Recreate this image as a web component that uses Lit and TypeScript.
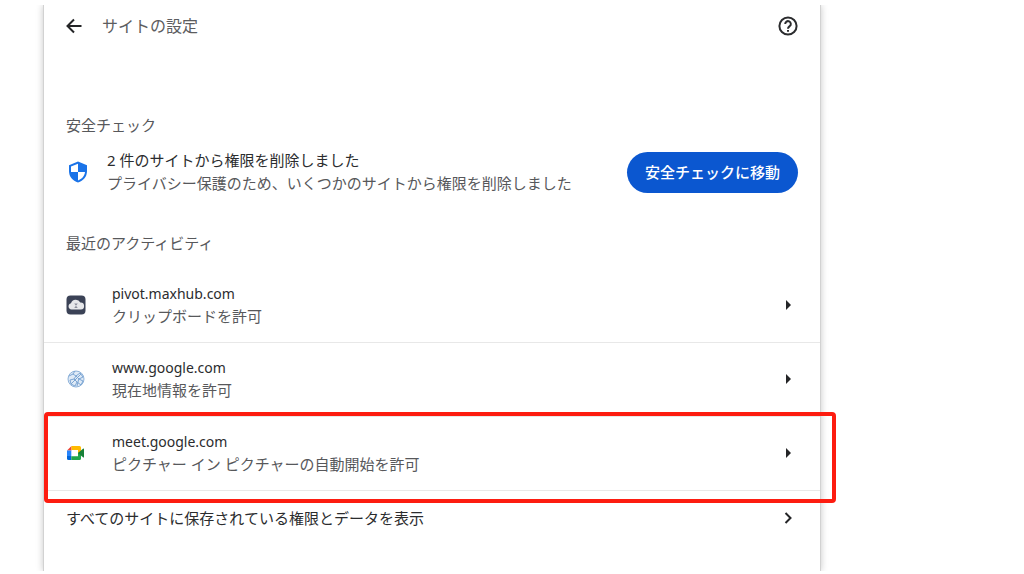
import { LitElement, html, css, svg } from "lit";
import { customElement, state } from "lit/decorators.js";

const cloudIcon = svg`<svg class="favicon" viewBox="0 0 20 20" aria-hidden="true">
  <rect x="0.5" y="0.5" width="19" height="19" rx="4" fill="#3b4256"/>
  <path d="M5.500 14.500a3.200 3.200 0 0 1-.5-6.300A5 5 0 0 1 14.300 7.500a3.500 3.500 0 0 1 .6 7z" fill="#e6e7ea"/>
  <path d="M8.200 8.500h3.600L10 10.800zM8.200 13h3.600L10 10.800z" fill="#8b8e9b"/>
</svg>`;

const globeIcon = svg`<svg class="favicon" viewBox="0 0 20 20" aria-hidden="true" fill="none" stroke="#8fb3da" stroke-width="1">
  <circle cx="10" cy="10" r="8" fill="#dfeaf6"/>
  <path d="M3 7l4-2 3 2-2 3-4 1M7 5l2-3M10 7l4-3 3 4-4 2-3-3M8 10l3 3-2 4-4-2-1-4M13 10l4 2-2 4-4-3M5 15l5-5 5-5M13 9l-2 8" stroke="#7ba5d3"/>
</svg>`;

const meetIcon = svg`<svg class="favicon" viewBox="0 0 20 20" aria-hidden="true">
  <path d="M1 7.500L5.500 3v4.500z" fill="#ea4335"/>
  <path d="M1 7.500h4.300v5.500H1z" fill="#2684fc"/>
  <path d="M1 13h4.300v4H2.500A1.500 1.500 0 0 1 1 15.500z" fill="#0066da"/>
  <path d="M5.500 3h8A1.500 1.500 0 0 1 15 4.500V9l-3 2V7h-6.500z" fill="#ffba00"/>
  <path d="M5.300 13.300H12V10l3-2v7.500a1.500 1.500 0 0 1-1.500 1.500H5.300z" fill="#1fa64c"/>
  <path d="M12 10l5-4.300c.5-.4 1-.1 1 .4v7.800c0 .5-.5.8-1 .4z" fill="#188038"/>
</svg>`;

interface Activity {
  site: string;
  detail: string;
  icon: unknown;
  marked?: boolean;
}

@customElement("app-root")
export class AppRoot extends LitElement {
  static styles = css`
    :host {
      display: block;
      box-sizing: border-box;
      min-height: 100vh;
      padding: 5px 0 3px 43px;
      overflow: hidden;
      background: #fff;
      color: #2b2c2e;
      font: 15px/22px "Noto Sans", "Noto Sans CJK JP", sans-serif;
    }
    .card {
      box-sizing: border-box;
      width: 79.3%;
      min-height: calc(100vh - 8px);
      border: solid #d2d2d2;
      border-width: 0 1px;
      box-shadow: 0 0 7px rgba(0, 0, 0, 0.22);
      clip-path: inset(0 -20px 0 -20px);
    }
    button {
      font: inherit;
      color: inherit;
      border: 0;
      background: none;
      padding: 0;
      cursor: pointer;
    }
    svg {
      display: block;
      flex: none;
    }
    .header {
      display: flex;
      align-items: center;
      padding: 9px 22px 0 20px;
    }
    .title {
      flex: 1;
      margin: 0 0 0 18px;
      font-size: 16px;
      line-height: 24px;
      font-weight: 400;
      color: #5c5d60;
    }
    .label {
      margin: 0;
      padding: 0 22px;
      font-size: 15px;
      line-height: 22px;
      font-weight: 400;
      color: #57585b;
    }
    .safety-label {
      margin-top: 76px;
    }
    .safety {
      display: flex;
      align-items: center;
      padding: 13px 22px 0;
      line-height: 23px;
    }
    .safety .text {
      margin-left: 17px;
    }
    .text {
      flex: 1;
      min-width: 0;
      text-align: left;
    }
    .text p {
      margin: 0;
    }
    .detail {
      color: #57585b;
    }
    .primary {
      height: 41px;
      padding: 0 18px;
      border-radius: 21px;
      background: #0b57d0;
      color: #fff;
      font-weight: 500;
      white-space: nowrap;
    }
    .recent-label {
      margin-top: 37px;
    }
    .list {
      list-style: none;
      margin: 15px 0 0;
      padding: 0;
    }
    .item {
      position: relative;
      border-bottom: 1px solid #e8e8e8;
    }
    .row {
      display: flex;
      align-items: center;
      box-sizing: border-box;
      width: 100%;
      min-height: 73px;
      padding: 0 22px 2px;
    }
    .row .text {
      margin-left: 26px;
    }
    .site {
      font-size: 14px;
    }
    .favicon {
      width: 20px;
      height: 20px;
    }
    .marker {
      position: absolute;
      inset: -5px -16px -13px 0;
      border: 4px solid #fd1c10;
      border-radius: 4px;
      pointer-events: none;
    }
    .all {
      display: flex;
      align-items: center;
      justify-content: space-between;
      width: 100%;
      padding: 16px 22px;
      text-align: left;
    }
  `;

  @state() private activities: Activity[] = [
    { site: "pivot.maxhub.com", detail: "クリップボードを許可", icon: cloudIcon },
    { site: "www.google.com", detail: "現在地情報を許可", icon: globeIcon },
    {
      site: "meet.google.com",
      detail: "ピクチャー イン ピクチャーの自動開始を許可",
      icon: meetIcon,
      marked: true,
    },
  ];

  render() {
    return html`
      <main class="card">
        <header class="header">
          <button aria-label="戻る">
            <svg width="20" height="20" viewBox="0 0 20 20" fill="none" stroke="#242527" stroke-width="2">
              <path d="M17.500 10H4M10 3.500L3.500 10l6.500 6.500"/>
            </svg>
          </button>
          <h1 class="title">サイトの設定</h1>
          <button aria-label="ヘルプ">
            <svg width="20" height="20" viewBox="0 0 20 20" fill="none" stroke="#2b2c2e" stroke-width="2">
              <circle cx="10" cy="10" r="8.600"/>
              <path d="M7.200 8a2.800 2.800 0 1 1 4.600 2.100C10.700 11 10 11.400 10 12.700"/>
              <path d="M10 13.900v1.900"/>
            </svg>
          </button>
        </header>

        <h2 class="label safety-label">安全チェック</h2>
        <section class="safety">
          <svg width="24" height="24" viewBox="0 0 24 24" aria-hidden="true">
            <path d="M12 1.500l9 3.700V11c0 5.500-3.600 9.900-9 11.500C6.600 20.900 3 16.500 3 11V5.200z" fill="#1a73e8"/>
            <path d="M12 3.800v8.200H5V6.600zM12 12h7c-.4 3.900-3.100 7.100-7 8.400z" fill="#fff"/>
          </svg>
          <div class="text">
            <p>2 件のサイトから権限を削除しました</p>
            <p class="detail">プライバシー保護のため、いくつかのサイトから権限を削除しました</p>
          </div>
          <button class="primary">安全チェックに移動</button>
        </section>

        <h2 class="label recent-label">最近のアクティビティ</h2>
        <ul class="list">
          ${this.activities.map(
            (a) => html`<li class="item">
              <button class="row">
                ${a.icon}
                <div class="text">
                  <p class="site">${a.site}</p>
                  <p class="detail">${a.detail}</p>
                </div>
                <svg width="20" height="20" viewBox="0 0 20 20" aria-hidden="true">
                  <path d="M8 5l5 5-5 5z" fill="#242527"/>
                </svg>
              </button>
              ${a.marked ? html`<div class="marker"></div>` : null}
            </li>`
          )}
        </ul>
        <button class="all">
          すべてのサイトに保存されている権限とデータを表示
          <svg width="20" height="20" viewBox="0 0 20 20" aria-hidden="true" fill="none" stroke="#242527" stroke-width="2">
            <path d="M7.500 5l5 5-5 5"/>
          </svg>
        </button>
      </main>
    `;
  }
}
